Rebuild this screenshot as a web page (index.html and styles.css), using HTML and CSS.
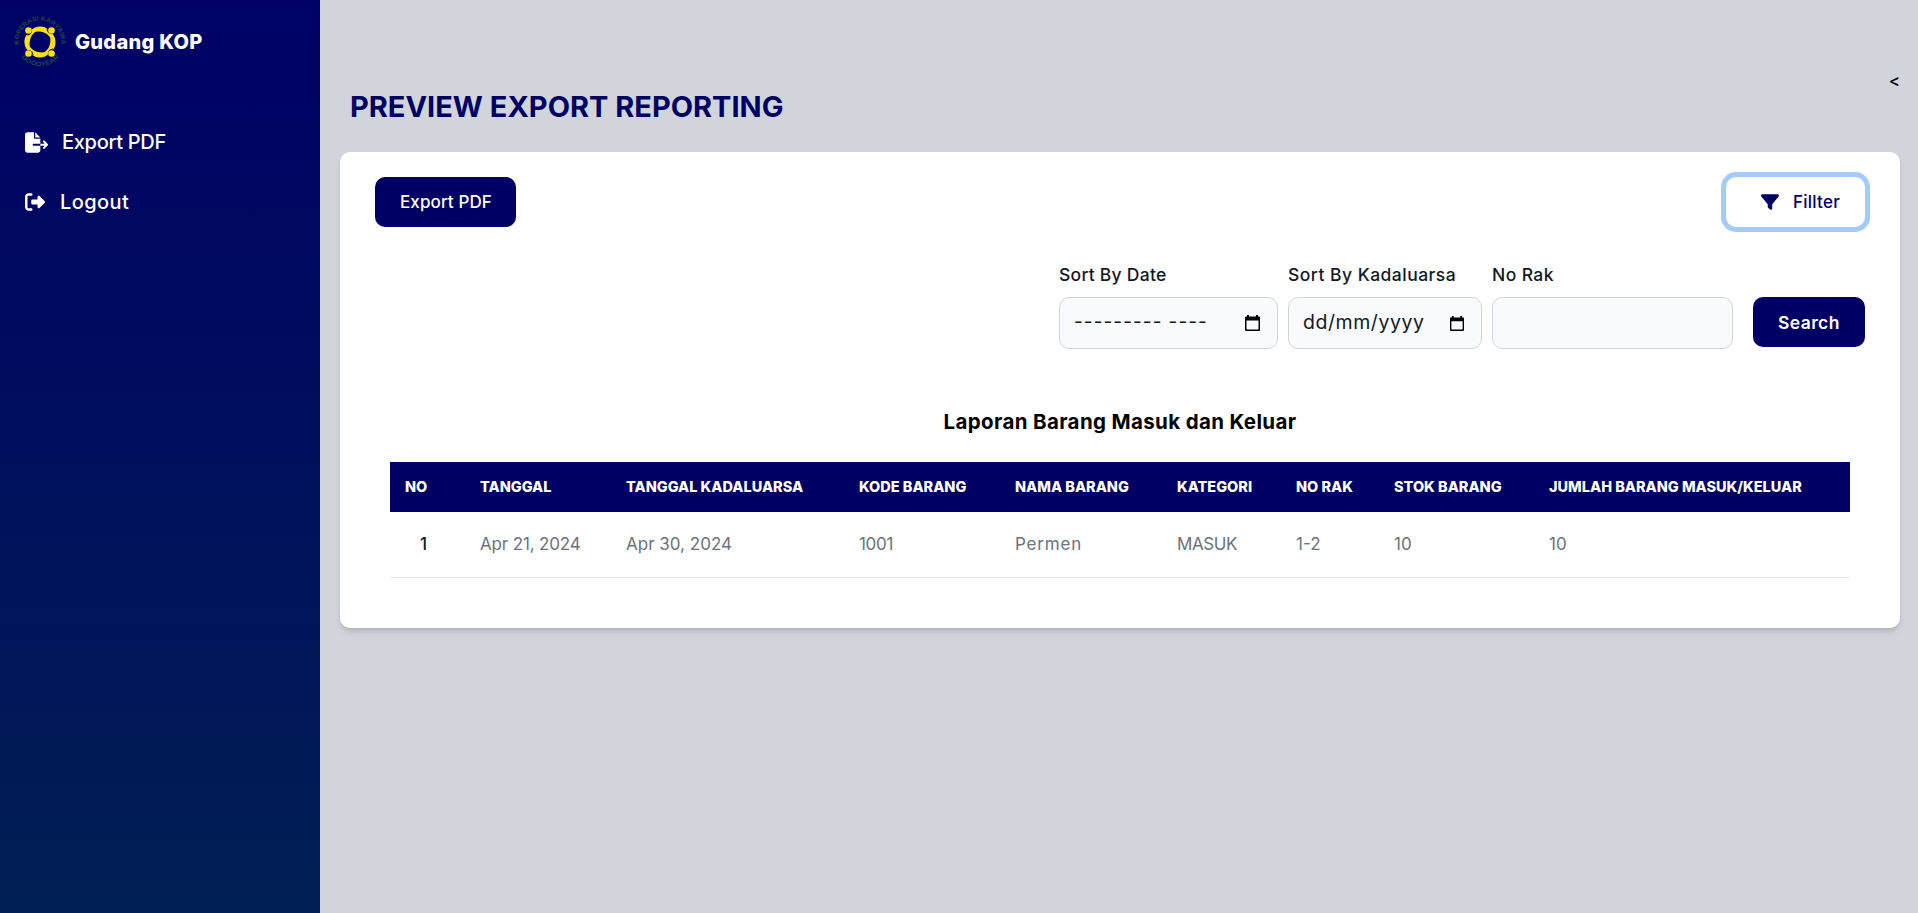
FILE: index.html
```html
<!DOCTYPE html>
<html lang="id">
<head>
<meta charset="utf-8">
<title>Gudang KOP</title>
<link rel="stylesheet" href="styles.css">
</head>
<body>
<div class="app">
  <aside class="sidebar">
    <div class="brand">
      <svg class="logo" viewBox="0 0 50 50">
        <defs>
          <path id="arc-top" d="M4 28.500A21.300 21.300 0 1 1 46 28.500"/>
          <path id="arc-bottom" d="M5.500 39.500A24.500 24.500 0 0 0 44.500 39.500"/>
          <g id="person">
            <circle cx="13.500" cy="13.500" r="3.300"/>
            <path d="M17 12.400C21 8.600 29.500 8.300 33 12.400C26 10.800 19 14 16 20C14.500 24 14.200 27 15 31C10.500 27 10 21.500 12.600 18.200C15.500 18 17.300 16 17 12.400Z"/>
          </g>
        </defs>
        <g class="logo-text">
          <text><textPath href="#arc-top" startOffset="1" textLength="77" lengthAdjust="spacingAndGlyphs">KOPERASI KARYAWAN</textPath></text>
          <text><textPath href="#arc-bottom" startOffset="1" textLength="43" lengthAdjust="spacingAndGlyphs">GOODYEAR</textPath></text>
        </g>
        <g class="logo-mark">
          <use href="#person"/>
          <use href="#person" transform="rotate(90 25 25)"/>
          <use href="#person" transform="rotate(180 25 25)"/>
          <use href="#person" transform="rotate(270 25 25)"/>
        </g>
      </svg>
      <span class="brand-name">Gudang KOP</span>
    </div>
    <nav class="menu">
      <a class="menu-item">
        <svg class="icon-export" viewBox="0 0 576 512"><path d="M0 64C0 28.700 28.700 0 64 0H224V128c0 17.700 14.300 32 32 32H384V288H216c-13.300 0-24 10.700-24 24s10.700 24 24 24H384V448c0 35.300-28.700 64-64 64H64c-35.300 0-64-28.700-64-64V64zM384 336V288H494.100l-39-39c-9.400-9.400-9.400-24.600 0-33.900s24.600-9.400 33.900 0l80 80c9.400 9.400 9.400 24.600 0 33.900l-80 80c-9.400 9.400-24.600 9.400-33.900 0s-9.400-24.600 0-33.900l39-39H384zm0-208H256V0L384 128z"/></svg>
        <span class="menu-export">Export PDF</span>
      </a>
      <a class="menu-item">
        <svg class="icon-logout" viewBox="0 0 512 512"><path d="M377.900 105.900L500.700 228.700c7.200 7.200 11.300 17.100 11.300 27.300s-4.100 20.100-11.300 27.300L377.900 406.100c-6.400 6.400-15 9.900-24 9.900c-18.700 0-33.900-15.200-33.900-33.900l0-62.100-128 0c-17.700 0-32-14.300-32-32l0-64c0-17.700 14.300-32 32-32l128 0 0-62.100c0-18.700 15.200-33.900 33.900-33.900c9 0 17.600 3.600 24 9.900zM160 96L96 96c-17.700 0-32 14.300-32 32l0 256c0 17.700 14.300 32 32 32l64 0c17.700 0 32 14.300 32 32s-14.300 32-32 32l-64 0c-53 0-96-43-96-96L0 128C0 75 43 32 96 32l64 0c17.700 0 32 14.300 32 32s-14.300 32-32 32z"/></svg>
        <span class="menu-logout">Logout</span>
      </a>
    </nav>
  </aside>
  <main class="main">
    <header class="page-head">
      <h1 class="page-title">PREVIEW EXPORT REPORTING</h1>
      <span class="collapse">&lt;</span>
    </header>
    <section class="card">
      <div class="toolbar">
        <button class="btn btn-export">Export PDF</button>
        <button class="btn btn-filter">
          <svg class="icon-filter" viewBox="0 0 512 512"><path d="M3.900 54.900C10.500 40.900 24.500 32 40 32H472c15.500 0 29.500 8.900 36.100 22.900s4.600 30.500-5.200 42.500L320 320.900V448c0 12.100-6.800 23.200-17.700 28.600s-23.800 4.300-33.500-3l-64-48c-8.100-6-12.800-15.500-12.800-25.600V320.900L9 97.300C-.7 85.400-2.800 68.800 3.900 54.900z"/></svg>
          <span>Fillter</span>
        </button>
      </div>
      <div class="filters">
        <div class="field field-month">
          <label class="label-date">Sort By Date</label>
          <div class="input"><span class="dashes"><span>---------</span><span class="year">----</span></span>
            <svg class="icon-cal" viewBox="0 0 15 16"><path fill-rule="evenodd" d="M2 0h2v1.500h7V0h2v1.500h1A1 1 0 0 1 15 2.500V15a1 1 0 0 1-1 1H1a1 1 0 0 1-1-1V2.500A1 1 0 0 1 1 1.500h1zM1.500 5.500v9h12v-9z"/></svg>
          </div>
        </div>
        <div class="field field-day">
          <label class="label-exp">Sort By Kadaluarsa</label>
          <div class="input"><span class="date-hint">dd/mm/yyyy</span>
            <svg class="icon-cal cal-small" viewBox="0 0 15 16"><path fill-rule="evenodd" d="M2 0h2v1.500h7V0h2v1.500h1A1 1 0 0 1 15 2.500V15a1 1 0 0 1-1 1H1a1 1 0 0 1-1-1V2.500A1 1 0 0 1 1 1.500h1zM1.500 5.500v9h12v-9z"/></svg>
          </div>
        </div>
        <div class="field field-rak">
          <label class="label-rak">No Rak</label>
          <div class="input"></div>
        </div>
        <button class="btn btn-search">Search</button>
      </div>
      <h2 class="report-title">Laporan Barang Masuk dan Keluar</h2>
      <table class="report">
        <colgroup><col class="c1"><col class="c2"><col class="c3"><col class="c4"><col class="c5"><col class="c6"><col class="c7"><col class="c8"><col class="c9"></colgroup>
        <thead>
          <tr><th>NO</th><th>TANGGAL</th><th>TANGGAL KADALUARSA</th><th>KODE BARANG</th><th>NAMA BARANG</th><th>KATEGORI</th><th>NO RAK</th><th>STOK BARANG</th><th>JUMLAH BARANG MASUK/KELUAR</th></tr>
        </thead>
        <tbody>
          <tr><td class="row-no">1</td><td class="in-date">Apr 21, 2024</td><td>Apr 30, 2024</td><td class="code">1001</td><td class="name">Permen</td><td class="category">MASUK</td><td>1-2</td><td>10</td><td>10</td></tr>
        </tbody>
      </table>
    </section>
  </main>
</div>
</body>
</html>
```
FILE: styles.css
```css
* { box-sizing: border-box; }
body { margin: 0; font-family: Inter, "Open Sans", sans-serif; background: #d1d5db; color: #000; }
h1, h2 { margin: 0; }
.app { display: flex; height: 913px; overflow: hidden; }
.sidebar { width: 320px; flex: none; color: #fff; background: linear-gradient(#000066, #001f54); }
.brand { display: flex; align-items: center; height: 50px; margin: 17px 0 0 15px; }
.logo { width: 50px; height: 50px; overflow: visible; }
.logo-mark { fill: #fde01a; }
.logo-text { fill: #16444a; font-size: 6px; font-weight: 700; }
.brand-name { margin-left: 10px; font-size: 20px; font-weight: 800; letter-spacing: .3px; }
.menu { margin-top: 45px; padding-left: 25px; font-size: 20px; font-weight: 500; }
.menu-item { display: flex; align-items: center; height: 60px; }
.menu svg { fill: #fff; flex: none; }
.menu-export { letter-spacing: -.3px; }
.menu-logout { letter-spacing: .4px; }
.icon-export { width: 23px; height: 21px; margin-right: 14px; }
.icon-logout { width: 20px; height: 20px; margin-right: 15px; }
.main { flex: 1; padding: 0 18px 0 20px; }
.page-head { display: flex; justify-content: space-between; height: 152px; padding-left: 10px; }
.page-title { margin-top: 85px; line-height: 44px; font-size: 29px; font-weight: 700; color: #000064; }
.collapse { margin-top: 66px; margin-right: 0; font-size: 17px; line-height: 30px; font-weight: 500; }
.card { height: 476px; background: #fff; border-radius: 10px; box-shadow: 0 5px 7.500px -1px rgba(0,0,0,.1), 0 2.500px 5px -2px rgba(0,0,0,.1); }
.toolbar { display: flex; justify-content: space-between; padding: 25px 35px 0; }
.btn { display: flex; align-items: center; height: 50px; padding: 0 25px; border: 0; border-radius: 10px; background: #000064; color: #fff; font: 500 17px/25px Inter, "Open Sans", sans-serif; white-space: nowrap; }
.btn-export { width: 141px; letter-spacing: .1px; }
.btn-filter { width: 139px; padding-left: 35px; background: #fff; color: #000064; letter-spacing: .25px; box-shadow: 0 0 0 5px #a4cafe; }
.icon-filter { width: 18px; height: 18px; margin-right: 14px; fill: #000064; }
.filters { display: flex; justify-content: flex-end; align-items: flex-start; gap: 10px; margin-top: 35px; padding-right: 35px; }
.field label { display: block; height: 25px; margin-bottom: 10px; line-height: 25px; font-size: 17.500px; font-weight: 500; color: #111928; }
.field .label-date { letter-spacing: .26px; }
.field .label-exp { letter-spacing: .48px; }
.field .label-rak { letter-spacing: .4px; }
.field-month { width: 219px; }
.field-day { width: 194px; }
.field-rak { width: 241px; }
.input { display: flex; align-items: center; justify-content: space-between; height: 52px; padding: 0 17px 0 14px; border: 1px solid #d1d5db; border-radius: 10px; background: #f9fafb; color: #111928; }
.dashes { display: flex; gap: 6px; margin-top: -3px; font-size: 19px; letter-spacing: 1.100px; }
.date-hint { margin-top: -2px; font-size: 19.500px; letter-spacing: .55px; }
.icon-cal { width: 15px; height: 16px; }
.cal-small { width: 14px; height: 15px; }
.btn-search { width: 112px; margin: 35px 0 0 10px; font-size: 17.500px; font-weight: 600; letter-spacing: .4px; }
.report-title { height: 30px; margin-top: 58px; line-height: 30px; font-size: 20.500px; font-weight: 700; letter-spacing: .36px; text-align: center; }
.report { width: 1460px; margin: 25px 0 0 50px; table-layout: fixed; border-collapse: separate; border-spacing: 0; text-align: left; white-space: nowrap; }
.report th { height: 50px; padding: 0 0 2px 15px; background: #000064; color: #fff; font-size: 14.500px; font-weight: 800; }
.report td { height: 66px; padding: 0 0 2px 15px; border-bottom: 1px solid #e5e7eb; font-size: 17px; color: #6b7280; }
.report .row-no { padding-left: 30px; font-weight: 500; color: #111928; }
.report .in-date { letter-spacing: -.15px; }
.report .code { letter-spacing: -.3px; }
.report .name { letter-spacing: .8px; }
.report .category { letter-spacing: -.4px; }
.c1 { width: 75px; } .c2 { width: 146px; } .c3 { width: 233px; } .c4 { width: 156px; } .c5 { width: 162px; }
.c6 { width: 119px; } .c7 { width: 98px; } .c8 { width: 155px; } .c9 { width: 316px; }
```
